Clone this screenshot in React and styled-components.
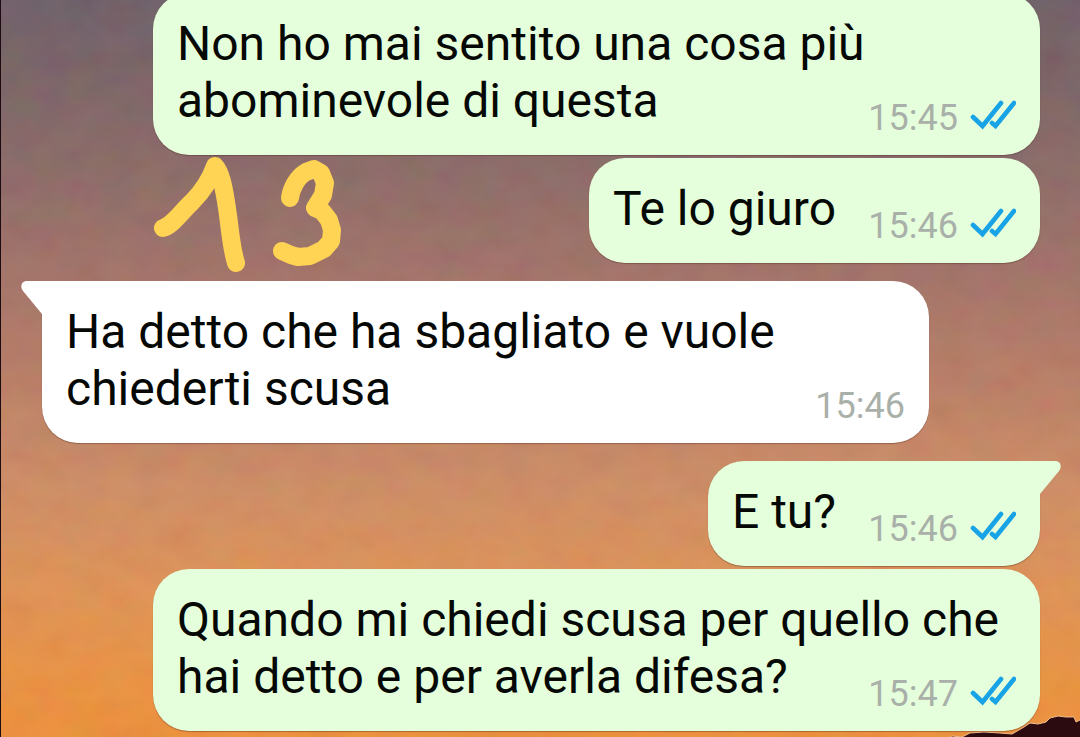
import React from 'react';
import styled, { createGlobalStyle } from 'styled-components';

const GlobalStyle = createGlobalStyle`
  * {
    box-sizing: border-box;
  }

  body {
    margin: 0;
    font-family: Roboto, "Liberation Sans", sans-serif;
  }
`;

const Screen = styled.main`
  position: relative;
  height: 100vh;
  overflow: hidden;
  display: flex;
  flex-direction: column;
  justify-content: flex-end;
  border-left: 1px solid #1c0b10;
  background: linear-gradient(
    to bottom,
    #6b5a64 0%,
    #7a6062 12%,
    #8b6763 24%,
    #a36f64 38%,
    #ba7b61 52%,
    #cf8a60 66%,
    #e29050 80%,
    #ec903c 92%,
    #f08d34 100%
  );
`;

const Grain = styled.svg`
  position: absolute;
  inset: 0;
  width: 100%;
  height: 100%;
`;

const Treetops = styled.svg`
  position: absolute;
  right: 0;
  bottom: 0;
  width: 140px;
  height: 24px;
`;

const Thread = styled.ol`
  position: relative;
  list-style: none;
  margin: 0;
  padding: 0 40px 6px 41px;
  display: flex;
  flex-direction: column;
`;

const Row = styled.li`
  position: relative;
  display: flex;
  justify-content: ${props => props.$mine ? 'flex-end' : 'flex-start'};
  margin-top: ${props => props.$tail ? '18px' : '3px'};
`;

const Bubble = styled.div`
  position: relative;
  display: grid;
  max-width: calc(100% - 111px);
  padding: 22px 24px 26px;
  border-radius: 36px;
  border-top-left-radius: ${props => props.$tail && !props.$mine ? '0' : '36px'};
  border-top-right-radius: ${props => props.$tail && props.$mine ? '0' : '36px'};
  background-color: ${props => props.$mine ? '#e5ffdc' : '#ffffff'};
  box-shadow: 0 1px 1px rgba(60, 30, 20, 0.35);
`;

const Tail = styled.svg`
  position: absolute;
  top: 0;
  left: ${props => props.$mine ? 'auto' : '-21px'};
  right: ${props => props.$mine ? '-21px' : 'auto'};
  width: 22px;
  height: 34px;
  transform: ${props => props.$mine ? 'scaleX(-1)' : 'none'};
`;

const Text = styled.p`
  grid-area: 1 / 1;
  margin: 0;
  color: #050805;
  font-size: 48px;
  line-height: 57px;
`;

// Keeps the last line clear of the time
const MetaSpace = styled.span`
  display: inline-block;
  width: ${props => props.$mine ? '180px' : '124px'};
`;

const Meta = styled.div`
  grid-area: 1 / 1;
  place-self: end;
  display: flex;
  align-items: center;
  gap: 12px;
  margin-bottom: -10px;
  color: #a9b0a9;
  font-size: 36px;
  line-height: 42px;
`;

const Checks = styled.svg`
  width: 46px;
  height: 30px;
  margin-bottom: 6px;
`;

const Doodle = styled.svg`
  position: absolute;
  top: -3px;
  left: 111px;
  width: 192px;
  height: 120px;
`;

const messages = [
  { id: 1, text: 'Non ho mai sentito una cosa più abominevole di questa', time: '15:45', mine: true },
  { id: 2, text: 'Te lo giuro', time: '15:46', mine: true, doodle: true },
  { id: 3, text: 'Ha detto che ha sbagliato e vuole chiederti scusa', time: '15:46', tail: true },
  { id: 4, text: 'E tu?', time: '15:46', mine: true, tail: true },
  { id: 5, text: 'Quando mi chiedi scusa per quello che hai detto e per averla difesa?', time: '15:47', mine: true }
];

const ReadChecks = () => (
  <Checks viewBox="0 0 46 30" fill="none" stroke="#17a3e6" strokeWidth="4.6" strokeLinecap="round" role="img" aria-label="Letto">
    <path d="M3 17L12.500 26L31 3" />
    <path d="M22 23L25.500 26L44 3" />
  </Checks>
);

// Finger-drawn strokes over the wallpaper
const Scribble = () => (
  <Doodle viewBox="0 0 192 120" fill="none" stroke="#ffd454" strokeWidth="18" strokeLinecap="round" strokeLinejoin="round" role="img" aria-label="13">
    <path d="M10 73C20 70 28 57 39 47C48 38 57 25 62 11C68 17 71 33 74 53C77 73 78 92 83 108" />
    <path d="M137 43C138 34 144 22 153 17L161 14L168 18L172 28L170 40L162 53L169 56L176 65L179 75L178 86L171 94L157 101L145 102L138 100L129 96" />
  </Doodle>
);

const Message = ({ message }) => {
  const { text, time, mine, tail, doodle } = message;

  return (
    <Row $mine={mine} $tail={tail}>
      {doodle && <Scribble />}
      <Bubble $mine={mine} $tail={tail}>
        {tail && (
          <Tail $mine={mine} viewBox="0 0 22 34" aria-hidden="true">
            <path d="M22 0H6C0 0 -1 6 2 10L21 33H22Z" fill={mine ? '#e5ffdc' : '#ffffff'} />
          </Tail>
        )}
        <Text>
          {text}
          <MetaSpace $mine={mine} />
        </Text>
        <Meta>
          <time>{time}</time>
          {mine && <ReadChecks />}
        </Meta>
      </Bubble>
    </Row>
  );
};

const App = () => {
  return (
    <>
      <GlobalStyle />
      <Screen>
        <Grain aria-hidden="true">
          <filter id="grain">
            <feTurbulence type="fractalNoise" baseFrequency="0.03 0.04" numOctaves="3" seed="4" />
            <feColorMatrix type="matrix" values="1 0 0 0 0  0 1 0 0 0  0 0 1 0 0  0 0 0 0 1" />
          </filter>
          <rect width="100%" height="100%" filter="url(#grain)" opacity="0.08" />
        </Grain>
        <Treetops viewBox="0 0 140 24" aria-hidden="true">
          <path
            d="M6 26L12 23L22 24L30 20L44 19L60 20L72 21L84 14L90 10L98 11L106 9L110 5L118 3L126 4L134 4L136 9L142 6V26Z"
            fill="#2b0b10"
            stroke="#f3bd8c"
            strokeWidth="1"
          />
        </Treetops>
        <Thread>
          {messages.map((message) => (
            <Message key={message.id} message={message} />
          ))}
        </Thread>
      </Screen>
    </>
  );
};

export default App;
